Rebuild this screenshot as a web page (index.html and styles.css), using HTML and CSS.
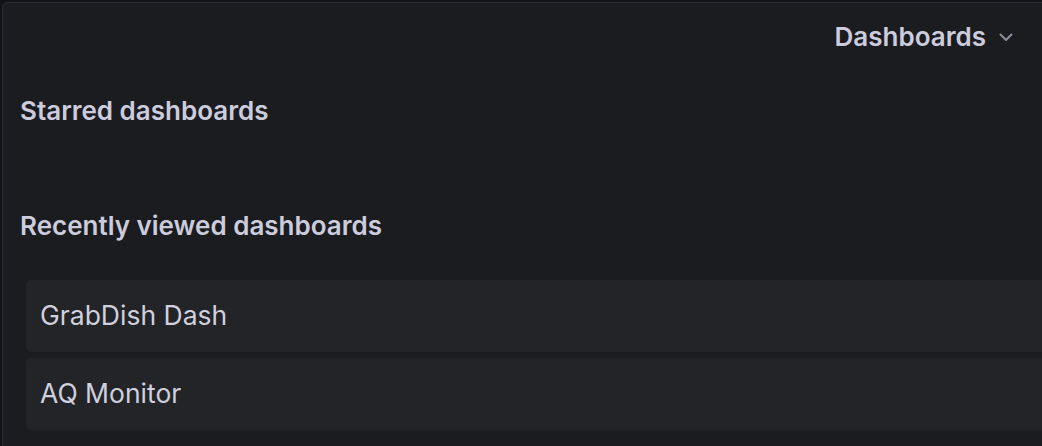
FILE: index.html
```html
<!DOCTYPE html>
<html>
<head>
<meta charset="utf-8">
<link rel="stylesheet" href="styles.css">
</head>
<body>
<div class="panel">
  <div class="panel-header">
    <span class="picker">Dashboards</span>
    <svg class="chev" width="14" height="9" viewBox="0 0 14 9"><path d="M1.5 1.5 L7 7 L12.5 1.5" fill="none" stroke="#8e8e9a" stroke-width="2" stroke-linecap="round" stroke-linejoin="round"/></svg>
  </div>
  <h2 class="section-title starred">Starred dashboards</h2>
  <h2 class="section-title recent">Recently viewed dashboards</h2>
  <ul class="list">
    <li class="item">GrabDish Dash</li>
    <li class="item">AQ Monitor</li>
  </ul>
</div>
</body>
</html>
```
FILE: styles.css
```css
html, body {
  margin: 0;
  padding: 0;
  background: #111217;
  overflow: hidden;
  width: 1042px;
  height: 446px;
}
body {
  font-family: Inter, "Noto Sans", sans-serif;
  color: #ccccdc;
}
.panel {
  margin: 2px 0 0 2px;
  width: 1080px;
  height: 480px;
  box-sizing: border-box;
  background: #1b1c20;
  border: 1px solid #2a2b30;
  border-radius: 5px;
  overflow: hidden;
}
.panel-header {
  display: flex;
  align-items: center;
  justify-content: flex-end;
  height: 20px;
  padding: 23px 68px 0 0;
  gap: 13px;
}
.picker {
  font-size: 26px;
  font-weight: 600;
  color: #ccccdc;
}
.chev { margin-top: 3px; }
.section-title {
  margin: 0;
  font-size: 26px;
  font-weight: 600;
  line-height: 30px;
  padding-left: 17px;
}
.starred { margin-top: 50px; }
.recent { margin-top: 85px; }
.list {
  list-style: none;
  margin: 39px 0 0 23px;
  padding: 0;
  display: flex;
  flex-direction: column;
  gap: 6px;
}
.item {
  height: 72px;
  display: flex;
  align-items: center;
  padding-left: 14px;
  padding-bottom: 3px;
  box-sizing: border-box;
  background: #232428;
  border-radius: 5px;
  font-size: 26.5px;
  font-weight: 400;
  color: #d0d0de;
}
```
